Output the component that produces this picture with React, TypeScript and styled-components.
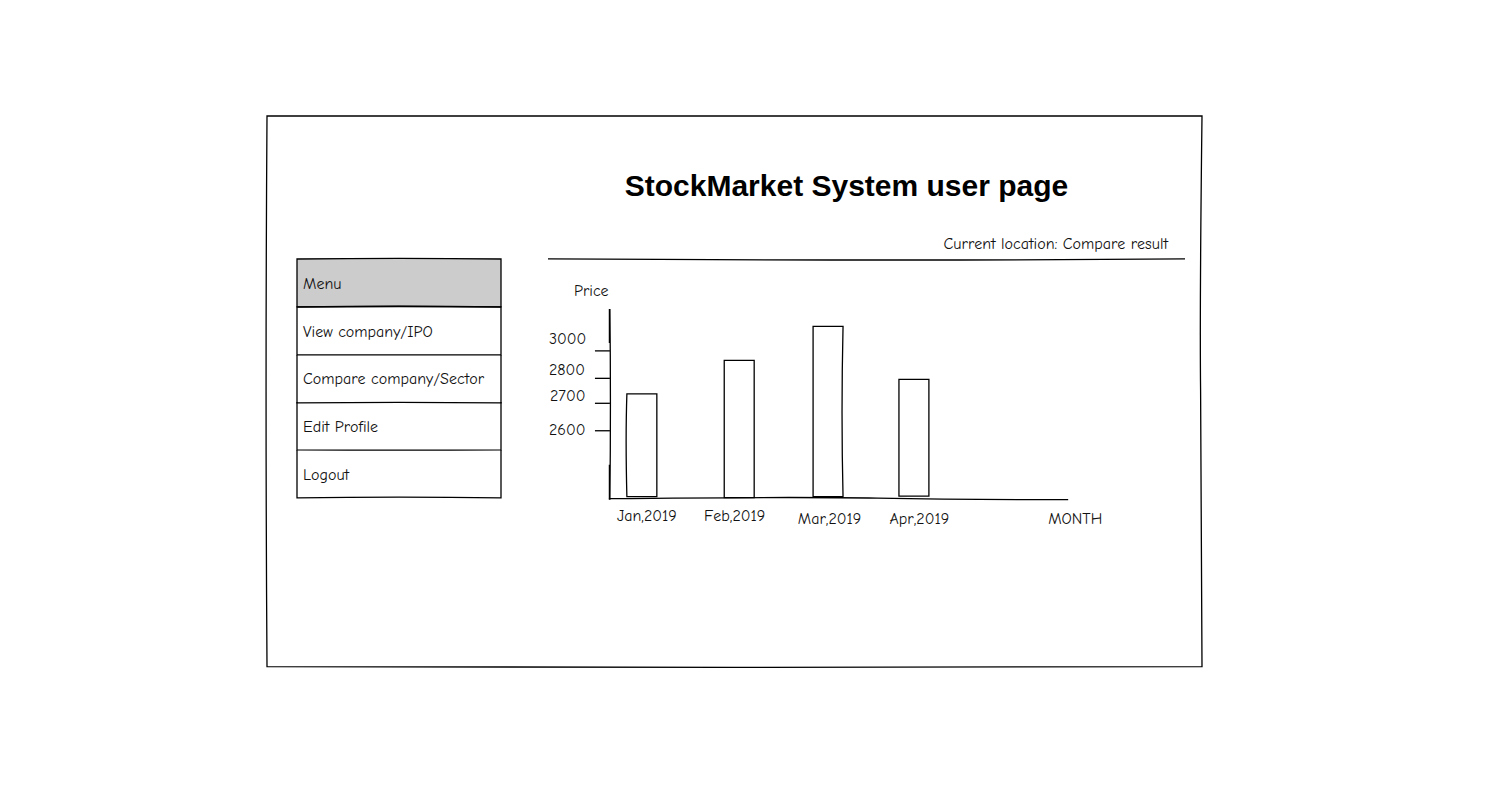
import React from "react";
import styled, { createGlobalStyle } from "styled-components";

const GlobalStyle = createGlobalStyle`
  * { box-sizing: border-box; }
  body {
    margin: 0;
    background: #fff;
    color: #111;
    font-family: "Comic Neue", Lato, "Open Sans", sans-serif;
    font-size: 16px;
    line-height: 20px;
    font-kerning: none;
    font-variant-ligatures: none;
  }
`;

const Page = styled.div`
  padding: 116px 283px 40px 267px;
`;

const Frame = styled.div`
  position: relative;
  display: grid;
  grid-template-columns: 204px minmax(0, 1fr);
  column-gap: 47px;
  padding: 0 17px 129px 30px;
`;

const Outline = styled.svg`
  position: absolute;
  inset: 0;
  width: 100%;
  height: 100%;
  overflow: visible;
  pointer-events: none;
  fill: none;
  stroke: #000;
  stroke-width: 1.3px;

  path { vector-effect: non-scaling-stroke; }
`;

const Menu = styled.nav`
  margin-top: 143px;
`;

const MenuList = styled.ul`
  display: grid;
  grid-template-rows: repeat(5, 1fr);
  height: 239px;
  margin: 0;
  padding: 0;
  list-style: none;
`;

const MenuRow = styled.li<{ $heading?: boolean }>`
  position: relative;
  display: flex;
  align-items: center;
  padding: 2px 6px 0;
  background: ${({ $heading }) => ($heading ? "#ccc" : "transparent")};
`;

const MenuLink = styled.a`
  flex: 1;
  color: inherit;
  text-decoration: none;
`;

const Main = styled.main`
  padding-top: 52px;
`;

const Title = styled.h1`
  margin: 0 40px 28px 0;
  font: bold 30px/36px "Liberation Sans", Arial, sans-serif;
  font-kerning: auto;
  color: #000;
  text-align: center;
`;

const Location = styled.p`
  position: relative;
  height: 28px;
  margin: 0 0 18px;
  padding: 2px 17px 0 0;
  text-align: right;
`;

const ChartDrawing = styled.svg`
  display: block;
  width: 638px;
  max-width: 100%;
  height: auto;
  overflow: visible;

  text { fill: #111; }
  path { fill: none; stroke: #000; stroke-width: 1.3px; }
`;

function Sketch({ d }: { d: string }) {
  return (
    <Outline viewBox="0 0 100 100" preserveAspectRatio="none" aria-hidden="true">
      <path d={d} />
    </Outline>
  );
}

const frameLine =
  "M0 0 H100 Q99.75 35 99.85 50 T100 100 Q50 100.3 0 100 Q-.2 50 0 0 Z";

const menuItems = [
  { label: "View company/IPO", line: "M0 0 Q50 -2 100 0 V100 H0 Z" },
  { label: "Compare company/Sector", line: "M100 0 V100 Q50 98 0 100 V0" },
  { label: "Edit Profile", line: "M100 0 V100 Q50 101 0 100 V0" },
  { label: "Logout", line: "M100 0 V100 Q50 97 0 100 V0" },
];

const ticks = [
  { label: "3000", x: 1, y: 66, line: 73 },
  { label: "2800", x: 1, y: 97, line: 100.5 },
  { label: "2700", x: 2, y: 123, line: 125.5 },
  { label: "2600", x: 1, y: 157, line: 153 },
];

const months = [
  { label: "Jan,2019", x: 99, y: 243, bar: "M79 116 H109 V219 H79 Q77.5 160 79 116 Z" },
  { label: "Feb,2019", x: 187, y: 243, bar: "M176.5 82.5 H206.5 V220 H176.5 Z" },
  { label: "Mar,2019", x: 282, y: 246, bar: "M265.5 48.5 H295.5 Q293.5 135 295.5 219 H265.5 Z" },
  { label: "Apr,2019", x: 372, y: 246, bar: "M351.5 101.5 H381.5 V218.5 H351.5 Z" },
];

function PriceChart() {
  return (
    <ChartDrawing viewBox="0 0 638 260" role="img" aria-label="Price by month">
      <text x="26" y="18">Price</text>
      <path d="M62 31 Q63 125 62 222 M61.5 31 V65 M61.5 187 V222" />
      {ticks.map((t) => (
        <g key={t.label}>
          <text x={t.x} y={t.y}>{t.label}</text>
          <path d={`M47 ${t.line} H62`} />
        </g>
      ))}
      <path d="M61 221 Q250 219 330 220.5 T521 222" />
      {months.map((m) => (
        <g key={m.label}>
          <path d={m.bar} />
          <text x={m.x} y={m.y} textAnchor="middle">{m.label}</text>
        </g>
      ))}
      <text x="501" y="246">MONTH</text>
    </ChartDrawing>
  );
}

export default function App() {
  return (
    <>
      <GlobalStyle />
      <Page>
        <Frame>
          <Menu aria-label="Menu">
            <MenuList>
              <MenuRow $heading>
                Menu
                <Sketch d="M0 0 Q50 -3 100 0 V100 Q50 97 0 100 Z" />
              </MenuRow>
              {menuItems.map((item) => (
                <MenuRow key={item.label}>
                  <MenuLink href="#">{item.label}</MenuLink>
                  <Sketch d={item.line} />
                </MenuRow>
              ))}
            </MenuList>
          </Menu>
          <Main>
            <Title>StockMarket System user page</Title>
            <Location>
              Current location: Compare result
              <Sketch d="M0 96 Q60 104 100 96" />
            </Location>
            <PriceChart />
          </Main>
          <Sketch d={frameLine} />
        </Frame>
      </Page>
    </>
  );
}
